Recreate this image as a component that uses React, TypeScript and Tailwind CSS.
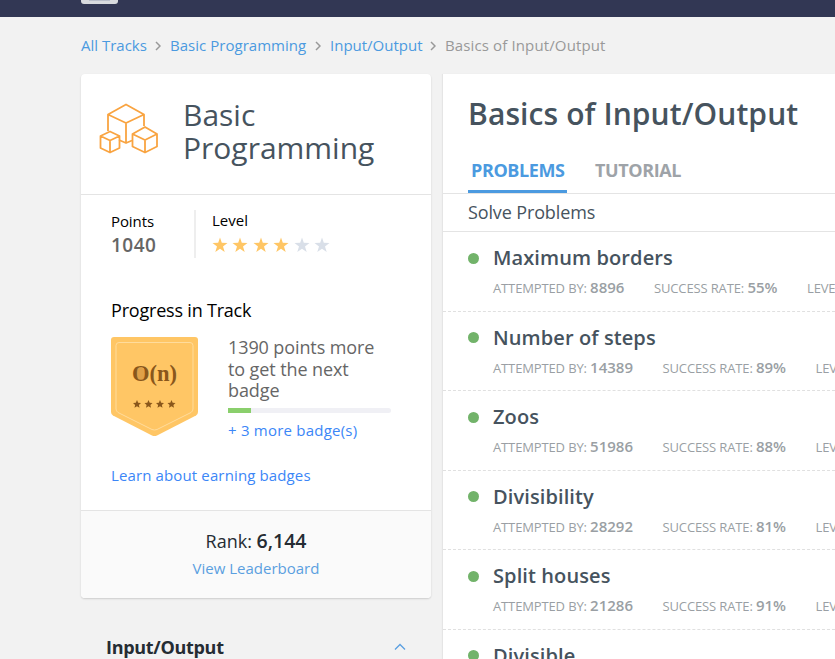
import React from "react";

const problems = [
  ["Maximum borders", "8896", "55%"],
  ["Number of steps", "14389", "89%"],
  ["Zoos", "51986", "88%"],
  ["Divisibility", "28292", "81%"],
  ["Split houses", "21286", "91%"],
  ["Divisible", "20115", "77%"],
];

function Chevron() {
  return (
    <svg width="6" height="10" viewBox="0 0 6 10" className="mx-[9px] mt-px shrink-0" fill="none" stroke="#999" strokeWidth="1.5">
      <path d="M1 1l4 4-4 4" />
    </svg>
  );
}

function Star({ color, size }: { color: string; size: number }) {
  return (
    <svg width={size} height={size} viewBox="0 0 16 16" fill={color}>
      <path d="M8 .6l1.8 5.200 5.700.100-4.500 3.500 1.700 5.600L8 11.700l-4.700 3.300 1.700-5.600L.5 5.900l5.700-.1z" />
    </svg>
  );
}

function Cubes() {
  return (
    <svg width="60" height="52" viewBox="0 0 60 52" className="shrink-0" fill="none" stroke="#f9a441" strokeWidth="1.800" strokeLinejoin="round">
      <path d="M9 28V11.500L27 1.500L45 11.500V23M9 11.500L27 20L45 11.500M27 20V40L20 37M27 40L33 37.500" />
      <path d="M1.500 33L11 28.500L20.500 33V45L11 49.500L1.500 45ZM1.500 33L11 37.500L20.500 33M11 37.500V49.500" />
      <path d="M33.500 31L46 24L58 31V43.500L46 49.500L33.500 43.500ZM33.500 31L46 37L58 31M46 37V49.500" />
    </svg>
  );
}

function Badge() {
  return (
    <svg width="87" height="100" viewBox="0 0 87 100" className="shrink-0">
      <path d="M3 0H84Q87 0 87 3V75Q87 77 85 78.500L46 98.500Q43.500 99.500 41 98.500L2 78.500Q0 77 0 75V3Q0 0 3 0Z" fill="#ffc665" />
      <path d="M8 5.500H79Q82 5.500 82 8.500V72Q82 74 80 75.500L46 92.500Q43.500 93.500 41 92.500L7 75.500Q5 74 5 72V8.500Q5 5.500 8 5.500Z" fill="none" stroke="#ffdc9c" strokeWidth="1" />
      <ellipse cx="29.500" cy="37" rx="5" ry="6.500" fill="#dfa048" />
      <text x="21" y="44" textLength="45" lengthAdjust="spacingAndGlyphs" fontSize="23" fontWeight="700" fill="#8a571b" className="font-['Liberation_Serif']">O(n)</text>
      {[26, 37.5, 49, 60.5].map((x) => (
        <path key={x} transform={`translate(${x - 4} 63) scale(.5)`} fill="#8a571b" d="M8 0l2.400 5.400 5.600.600-4.200 3.800 1.200 5.700L8 12.500l-5 3 1.200-5.700L0 6l5.600-.6z" />
      ))}
    </svg>
  );
}

export default function App() {
  return (
    <div className="h-[659px] w-[835px] overflow-hidden bg-[#f2f2f2] font-['Open_Sans','Noto_Sans',sans-serif] text-[#252c33]">
      <header className="h-[17px] bg-[#323754] pl-[81px]">
        <div className="h-1 w-[37px] rounded-b-[3px] bg-[#d8dade] px-2">
          <div className="h-px bg-[#b9bec9]" />
        </div>
      </header>
      <nav className="flex h-[57px] items-center whitespace-nowrap pl-[81px] text-[15px] text-[#4b9ae0]">
        <a className="w-[65px]">All Tracks</a><Chevron />
        <a className="w-[136px] tracking-[0.03px]">Basic Programming</a><Chevron />
        <a className="w-[91px]">Input/Output</a><Chevron />
        <span className="tracking-[0.13px] text-[#999]">Basics of Input/Output</span>
      </nav>
      <div className="flex items-start gap-3 pl-[81px]">
        <aside className="w-[350px] shrink-0">
          <section className="h-[524px] overflow-hidden rounded bg-white shadow-[0_1px_2px_rgba(0,0,0,0.16)]">
            <div className="flex h-[121px] border-b border-[#e4e4e4] pl-[18px] pt-[29px]">
              <Cubes />
              <h2 className="ml-6 -mt-[5px] text-[30px] leading-[33px] text-[#46535e]">Basic<br />Programming</h2>
            </div>
            <div className="h-[315px] px-[30px] pt-[15px] text-black">
              <div className="flex h-12">
                <div className="w-[85px] border-r-2 border-[#eee] pt-px text-[15px] leading-5">
                  <div className="tracking-[-0.1px]">Points</div>
                  <div className="mt-[2px] text-[19px] font-semibold leading-6 tracking-[0.5px] text-[#666]">1040</div>
                </div>
                <div className="pl-4 text-[15px] leading-5">
                  <div>Level</div>
                  <div className="mt-[7px] flex gap-[4.400px]">
                    {[0, 1, 2, 3, 4, 5].map((i) => <Star key={i} size={16} color={i < 4 ? "#ffc665" : "#d9dfe8"} />)}
                  </div>
                </div>
              </div>
              <h3 className="mt-10 text-[18px] leading-6 tracking-[-0.2px]">Progress in Track</h3>
              <div className="mt-[15px] flex gap-[30px]">
                <Badge />
                <div className="w-[163px]">
                  <p className="whitespace-nowrap text-[18px] leading-[21.500px] tracking-[-0.1px] text-[#666]">1390 points more<br />to get the next<br />badge</p>
                  <div className="mt-[6px] h-[5px] overflow-hidden rounded-r-full bg-[#f0f0f5]"><div className="h-full w-[23px] bg-[#8acf6c]" /></div>
                  <a className="mt-[7px] block text-[15px] leading-5 tracking-[0.22px] text-[#3b86f7]">+ 3 more badge(s)</a>
                </div>
              </div>
              <a className="mt-[25px] block text-[15px] leading-5 tracking-[0.13px] text-[#3b86f7]">Learn about earning badges</a>
            </div>
            <div className="h-[88px] border-t border-[#e4e4e4] bg-[#fafafa] pt-[17px] text-center">
              <div className="text-[18px] leading-[26px]">Rank: <b className="text-[19.500px] font-semibold">6,144</b></div>
              <a className="mt-1 block text-[15px] leading-5 text-[#5a9fe0]">View Leaderboard</a>
            </div>
          </section>
          <div className="mt-9 flex items-center justify-between pl-[25px] pr-[25px]">
            <h3 className="text-[18px] font-bold leading-[26px] tracking-[-0.3px]">Input/Output</h3>
            <svg width="12" height="8" viewBox="0 0 12 8" fill="none" stroke="#5a9fe0" strokeWidth="1.3"><path d="M1 6.500l5-5 5 5" /></svg>
          </div>
        </aside>
        <main className="h-[585px] w-[392px] shrink-0 overflow-hidden whitespace-nowrap bg-white shadow-[-1px_0_1px_rgba(0,0,0,0.05)]">
          <h1 className="h-[77px] pl-[25px] pt-5 text-[30px] font-semibold leading-10 tracking-[0.1px] text-[#46535e]">Basics of Input/Output</h1>
          <div className="flex h-[43px] items-start gap-7 border-b border-[#e4e4e4] pl-[25px] text-[18px] font-bold leading-[38px] tracking-[-0.4px] text-[#9ea3a8]">
            <span className="h-[42px] w-[99px] border-b-3 border-[#4b9ae0] pl-[3px] text-[#4b9ae0]">PROBLEMS</span>
            <span>TUTORIAL</span>
          </div>
          <div className="h-[38px] border-b border-[#e4e4e4] pl-[25px] text-[18px] leading-[37px] tracking-[-0.13px] text-[#46535e]">Solve Problems</div>
          {problems.map(([name, attempts, rate]) => (
            <article key={name} className="h-[79.500px] border-b border-dashed border-[#e0e0e0] pl-[25px] pt-3">
              <div className="flex items-center gap-[14px]">
                <i className="size-[11px] rounded-full bg-[#72b36a]" />
                <h2 className="text-[20px] font-semibold leading-7 tracking-[0.1px] text-[#46535e]">{name}</h2>
              </div>
              <div className="mt-[3.400px] flex gap-[29.500px] pl-[25px] text-[13px] leading-6 tracking-[-0.13px] text-[#9a9fa4]">
                <span>ATTEMPTED BY: <b className="text-[15px] font-semibold tracking-normal">{attempts}</b></span>
                <span>SUCCESS RATE: <b className="text-[15px] font-semibold tracking-normal">{rate}</b></span>
                <span>LEVEL: <b className="text-[15px] font-semibold tracking-normal">Easy</b></span>
              </div>
            </article>
          ))}
        </main>
      </div>
    </div>
  );
}
